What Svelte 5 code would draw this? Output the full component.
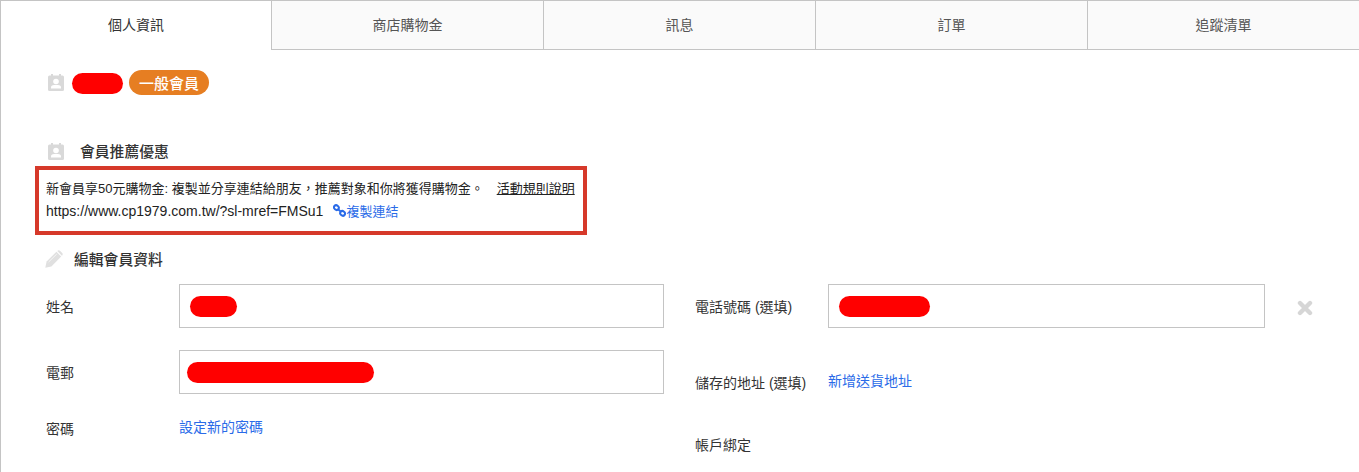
<script>
  const tabs = ['個人資訊', '商店購物金', '訊息', '訂單', '追蹤清單'];
</script>

{#snippet contact()}
  <svg class="contact" viewBox="0 0 16 17" aria-hidden="true">
    <rect x="3" y="0" width="2" height="3" fill="#d9d9d9" />
    <rect x="11" y="0" width="2" height="3" fill="#d9d9d9" />
    <rect x="0" y="1.5" width="16" height="15.5" rx="1.5" fill="#d9d9d9" />
    <circle cx="8" cy="7.5" r="2.8" fill="#fff" />
    <path d="M3 14.5v-1.2C3 11.6 4.6 11.2 6 11h4c1.4.2 3 .6 3 2.3v1.2z" fill="#fff" />
  </svg>
{/snippet}

<div class="page">
  <nav class="tabs">
    {#each tabs as tab, i}
      <div class="tab" class:active={i === 0}>{tab}</div>
    {/each}
  </nav>

  <main class="body">
    <div class="profile">
      {@render contact()}
      <span class="blob blob-user"></span>
      <span class="badge">一般會員</span>
    </div>

    <div class="head referral-head">
      {@render contact()}
      <h2>會員推薦優惠</h2>
    </div>

    <div class="promo">
      <p class="line">
        <span>新會員享50元購物金: 複製並分享連結給朋友，推薦對象和你將獲得購物金。</span>
        <a class="rules" href="#rules">活動規則說明</a>
      </p>
      <p class="line">
        <span class="url">https://www.cp1979.com.tw/?sl-mref=FMSu1</span>
        <a class="copy" href="#copy">
          <svg viewBox="0 0 13 13" aria-hidden="true">
            <g fill="none" stroke="#2a6be8" stroke-width="2">
              <ellipse cx="3.4" cy="3.6" rx="2.5" ry="2.2" transform="rotate(40 3.4 3.6)" />
              <ellipse cx="9.6" cy="9.4" rx="2.5" ry="2.2" transform="rotate(40 9.6 9.4)" />
              <path d="M5 5.2 8 7.8" />
            </g>
          </svg>複製連結</a>
      </p>
    </div>

    <div class="head edit-head">
      <svg class="pencil" viewBox="0 0 18 18" aria-hidden="true">
        <path d="M0.3 17.7 1.6 11.6 11.4 1.8 16.2 6.6 6.4 16.4z" fill="#e0e0e0" />
        <path d="M12.6 0.8c.7-.7 1.7-.7 2.4 0l2.2 2.2c.7.7.7 1.7 0 2.4L16.9 5.7 12.3 1.1z" fill="#e0e0e0" />
        <path d="M3.6 12 11.8 4" stroke="#fff" stroke-width=".7" />
      </svg>
      <h2>編輯會員資料</h2>
    </div>

    <div class="form">
      <div class="col">
        <div class="row">
          <span class="label">姓名</span>
          <div class="input"><span class="blob blob-name"></span></div>
        </div>
        <div class="row">
          <span class="label">電郵</span>
          <div class="input"><span class="blob blob-mail"></span></div>
        </div>
        <div class="row password">
          <span class="label">密碼</span>
          <a class="link" href="#password">設定新的密碼</a>
        </div>
      </div>

      <div class="col">
        <div class="row">
          <span class="label">電話號碼 (選填)</span>
          <div class="input"><span class="blob blob-phone"></span></div>
        </div>
        <div class="row address">
          <span class="label">儲存的地址 (選填)</span>
          <a class="link" href="#address">新增送貨地址</a>
        </div>
        <div class="row binding">
          <span class="label">帳戶綁定</span>
        </div>
      </div>

      <svg class="close" viewBox="0 0 16 16" aria-hidden="true">
        <path d="M3 3 13 13M13 3 3 13" stroke="#d6d6d6" stroke-width="4.4" stroke-linecap="round" />
      </svg>
    </div>
  </main>
</div>

<style>
  :global(body) {
    margin: 0;
    background: #fff;
  }

  .page {
    box-sizing: border-box;
    height: 472px;
    overflow: hidden;
    border-left: 1px solid #c4c4c4;
    border-top: 1px solid #c4c4c4;
    font-family: "Liberation Sans", "Noto Sans CJK TC", sans-serif;
    font-size: 14px;
    color: #333;
  }

  .tabs {
    display: grid;
    grid-template-columns: 270px repeat(4, 272px);
    height: 49px;
  }

  .tab {
    display: flex;
    align-items: center;
    justify-content: center;
    box-sizing: border-box;
    padding-bottom: 3px;
    background: #fafafa;
    border-left: 1px solid #c4c4c4;
    border-bottom: 1px solid #c4c4c4;
    color: #555;
  }

  .tab.active {
    background: #fff;
    border: 0;
    color: #333;
  }

  .body {
    padding-left: 45px;
  }

  .profile {
    display: flex;
    align-items: center;
    height: 25px;
    margin-top: 20px;
    padding-left: 2px;
  }

  .contact {
    flex: none;
    width: 16px;
    height: 17px;
  }

  .blob {
    display: block;
    flex: none;
    background: #f00;
    border-radius: 11px;
  }

  .blob-user {
    width: 51px;
    height: 21px;
    margin: 2px 6px 0 8px;
  }

  .badge {
    display: flex;
    align-items: center;
    justify-content: center;
    width: 80px;
    height: 25px;
    padding-bottom: 1px;
    box-sizing: border-box;
    border-radius: 13px;
    background: #e67e22;
    color: #fff;
    font-size: 15px;
    font-weight: 500;
  }

  .head {
    display: flex;
    align-items: center;
  }

  h2 {
    margin: 0 0 2px;
    font-size: 14.8px;
    font-weight: 500;
    color: #333;
  }

  .referral-head {
    margin-top: 46px;
    height: 20px;
    padding-left: 2px;
  }

  .referral-head h2 {
    margin-left: 16px;
  }

  .promo {
    box-sizing: border-box;
    width: 552px;
    height: 69px;
    margin: 5px 0 0 -11px;
    padding: 6px 0 0 7px;
    border: 4px solid #d6392a;
  }

  .line {
    display: flex;
    align-items: center;
    height: 23px;
    margin: 0;
    font-size: 13px;
    color: #222;
  }

  .url {
    font-size: 14px;
  }

  .rules {
    margin-left: 13px;
    color: #222;
    text-decoration: underline;
  }

  .copy {
    display: flex;
    align-items: center;
    margin-left: 10px;
    color: #2a6be8;
    text-decoration: none;
  }

  .copy svg {
    width: 13px;
    height: 13px;
  }

  .edit-head {
    height: 24px;
    margin-top: 12px;
    margin-left: -1px;
  }

  .pencil {
    width: 18px;
    height: 18px;
  }

  .edit-head h2 {
    margin-left: 11px;
  }

  .form {
    display: grid;
    grid-template-columns: 618px 570px auto;
    column-gap: 31px;
    margin-top: 13px;
  }

  .col {
    display: flex;
    flex-direction: column;
    gap: 22px;
  }

  .row {
    display: grid;
    grid-template-columns: 133px 1fr;
    align-items: center;
  }

  .label {
    white-space: nowrap;
  }

  .input {
    box-sizing: border-box;
    display: flex;
    align-items: center;
    height: 44px;
    border: 1px solid #c4c4c4;
  }

  .blob-name {
    width: 47px;
    height: 21px;
    margin-left: 10px;
  }

  .blob-mail {
    width: 187px;
    height: 21px;
    margin-left: 7px;
  }

  .blob-phone {
    width: 91px;
    height: 21px;
    margin-left: 10px;
  }

  .link {
    margin-bottom: 2px;
    color: #2a6be8;
    text-decoration: none;
  }

  .password {
    height: 24px;
    margin-top: -1px;
  }

  .password .label {
    margin-top: 2px;
  }

  .address {
    height: 24px;
    margin-top: 20px;
  }

  .address .link {
    margin-bottom: 4px;
  }

  .binding {
    height: 24px;
    margin-top: 16px;
  }

  .close {
    width: 16px;
    height: 16px;
    margin: 16px 0 0 1px;
  }
</style>
